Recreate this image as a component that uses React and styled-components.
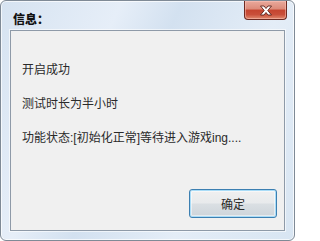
import React from "react";
import styled, { createGlobalStyle } from "styled-components";

const Global = createGlobalStyle`
  html, body {
    margin: 0;
    padding: 0;
    background: #ffffff;
  }
  body {
    font-family: "Liberation Sans", "Noto Sans CJK SC", sans-serif;
  }
`;

const Window = styled.div`
  width: 295px;
  height: 241px;
  box-sizing: border-box;
  display: flex;
  flex-direction: column;
  padding: 0 9px 9px 9px;
  border: 1px solid #7f8a96;
  border-radius: 6px;
  background: linear-gradient(
    115deg,
    #d6e3f1 0%,
    #e6eef8 30%,
    #d3e1f0 45%,
    #e4edf7 70%,
    #d8e5f2 100%
  );
  box-shadow: inset 0 0 0 1px rgba(255, 255, 255, 0.7);
`;

const TitleBar = styled.div`
  height: 29px;
  display: flex;
  align-items: flex-start;
  justify-content: space-between;
`;

const Title = styled.div`
  font-family: "Noto Sans CJK SC", sans-serif;
  font-size: 12px;
  font-weight: 900;
  color: #111111;
  padding: 10px 0 0 3px;
  line-height: 16px;
`;

const CloseButton = styled.button`
  width: 43px;
  height: 19px;
  margin: 0 -2px 0 0;
  padding: 0;
  display: flex;
  align-items: center;
  justify-content: center;
  border: 1px solid #6d2a22;
  border-top: none;
  border-radius: 0 0 4px 4px;
  background: linear-gradient(
    to bottom,
    #e9a99c 0%,
    #dc8a79 45%,
    #c5442f 50%,
    #c94f3a 75%,
    #e08a6f 100%
  );
  box-shadow: inset 0 0 0 1px rgba(255, 200, 190, 0.5);
`;

const Panel = styled.div`
  flex: 1;
  display: flex;
  flex-direction: column;
  background: #f0f0f0;
  border: 1px solid #8e9aa8;
  box-shadow: 0 0 0 1px rgba(255, 255, 255, 0.6);
  padding: 22px 7px 12px 11px;
`;

const Line = styled.div`
  font-size: 12px;
  line-height: 34px;
  color: #2a2a2a;
  white-space: nowrap;
`;

const Footer = styled.div`
  margin-top: auto;
  display: flex;
  justify-content: flex-end;
`;

const OkButton = styled.button`
  width: 88px;
  height: 29px;
  font-family: "Noto Sans CJK SC", sans-serif;
  font-size: 12px;
  color: #2a2a2a;
  border: 1px solid #3c7fb1;
  border-radius: 3px;
  background: linear-gradient(
    to bottom,
    #f0f0f0 0%,
    #e8eaec 48%,
    #dadfe3 52%,
    #cdd4da 100%
  );
  box-shadow: inset 0 0 0 1px #a9dcf7, inset 0 0 0 2px rgba(255, 255, 255, 0.5);
`;

function CloseIcon() {
  return (
    <svg width="14" height="11" viewBox="0 0 14 11">
      <path
        d="M1.5 1 L5 1 L7 3.5 L9 1 L12.5 1 L8.8 5.5 L12.5 10 L9 10 L7 7.5 L5 10 L1.5 10 L5.2 5.5 Z"
        fill="#ffffff"
        stroke="#5a1f18"
        strokeWidth="0.9"
        strokeLinejoin="round"
      />
    </svg>
  );
}

export default function App() {
  return (
    <>
      <Global />
      <Window>
        <TitleBar>
          <Title>信息：</Title>
          <CloseButton>
            <CloseIcon />
          </CloseButton>
        </TitleBar>
        <Panel>
          <Line>开启成功</Line>
          <Line>测试时长为半小时</Line>
          <Line>功能状态:[初始化正常]等待进入游戏ing....</Line>
          <Footer>
            <OkButton>确定</OkButton>
          </Footer>
        </Panel>
      </Window>
    </>
  );
}
